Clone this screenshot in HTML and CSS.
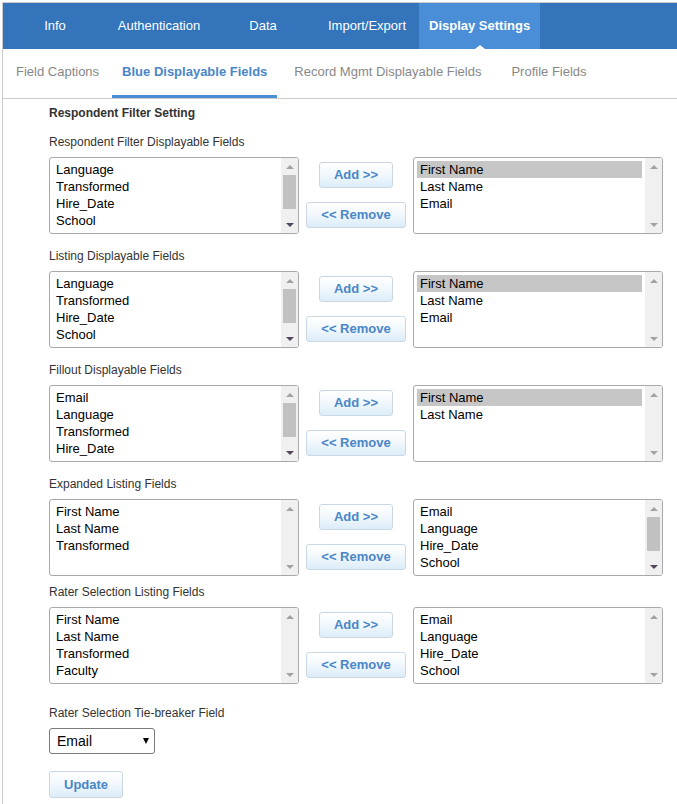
FILE: index.html
```html
<!DOCTYPE html>
<html lang="en">
<head>
<meta charset="utf-8">
<title>Display Settings</title>
<link rel="stylesheet" href="styles.css">
</head>
<body>
<div class="page">
  <nav class="topnav">
    <a class="topnav__item">Info</a>
    <a class="topnav__item">Authentication</a>
    <a class="topnav__item">Data</a>
    <a class="topnav__item">Import/Export</a>
    <a class="topnav__item topnav__item--active">Display Settings</a>
  </nav>
  <div class="subtabs">
    <a class="subtab subtab--1">Field Captions</a>
    <a class="subtab subtab--2 subtab--active">Blue Displayable Fields</a>
    <a class="subtab subtab--3">Record Mgmt Displayable Fields</a>
    <a class="subtab subtab--4">Profile Fields</a>
  </div>

  <div class="content">
    <h3 class="heading">Respondent Filter Setting</h3>

    <div class="section">
      <div class="label">Respondent Filter Displayable Fields</div>
      <div class="picker">
        <div class="listbox">
          <div class="listbox__items">
            <div class="option">Language</div>
            <div class="option">Transformed</div>
            <div class="option">Hire_Date</div>
            <div class="option">School</div>
            <div class="option">Faculty</div>
          </div>
          <div class="scrollbar scrollbar--scroll">
            <span class="sb-btn sb-btn--up"></span>
            <span class="sb-track"><span class="sb-thumb"></span></span>
            <span class="sb-btn sb-btn--down"></span>
          </div>
        </div>
        <div class="picker__actions">
          <button class="btn">Add &gt;&gt;</button>
          <button class="btn">&lt;&lt; Remove</button>
        </div>
        <div class="listbox">
          <div class="listbox__items">
            <div class="option option--selected">First Name</div>
            <div class="option">Last Name</div>
            <div class="option">Email</div>
          </div>
          <div class="scrollbar">
            <span class="sb-btn sb-btn--up"></span>
            <span class="sb-track"></span>
            <span class="sb-btn sb-btn--down"></span>
          </div>
        </div>
      </div>
    </div>

    <div class="section">
      <div class="label">Listing Displayable Fields</div>
      <div class="picker">
        <div class="listbox">
          <div class="listbox__items">
            <div class="option">Language</div>
            <div class="option">Transformed</div>
            <div class="option">Hire_Date</div>
            <div class="option">School</div>
            <div class="option">Faculty</div>
          </div>
          <div class="scrollbar scrollbar--scroll">
            <span class="sb-btn sb-btn--up"></span>
            <span class="sb-track"><span class="sb-thumb"></span></span>
            <span class="sb-btn sb-btn--down"></span>
          </div>
        </div>
        <div class="picker__actions">
          <button class="btn">Add &gt;&gt;</button>
          <button class="btn">&lt;&lt; Remove</button>
        </div>
        <div class="listbox">
          <div class="listbox__items">
            <div class="option option--selected">First Name</div>
            <div class="option">Last Name</div>
            <div class="option">Email</div>
          </div>
          <div class="scrollbar">
            <span class="sb-btn sb-btn--up"></span>
            <span class="sb-track"></span>
            <span class="sb-btn sb-btn--down"></span>
          </div>
        </div>
      </div>
    </div>

    <div class="section">
      <div class="label">Fillout Displayable Fields</div>
      <div class="picker">
        <div class="listbox">
          <div class="listbox__items">
            <div class="option">Email</div>
            <div class="option">Language</div>
            <div class="option">Transformed</div>
            <div class="option">Hire_Date</div>
            <div class="option">School</div>
          </div>
          <div class="scrollbar scrollbar--scroll">
            <span class="sb-btn sb-btn--up"></span>
            <span class="sb-track"><span class="sb-thumb"></span></span>
            <span class="sb-btn sb-btn--down"></span>
          </div>
        </div>
        <div class="picker__actions">
          <button class="btn">Add &gt;&gt;</button>
          <button class="btn">&lt;&lt; Remove</button>
        </div>
        <div class="listbox">
          <div class="listbox__items">
            <div class="option option--selected">First Name</div>
            <div class="option">Last Name</div>
          </div>
          <div class="scrollbar">
            <span class="sb-btn sb-btn--up"></span>
            <span class="sb-track"></span>
            <span class="sb-btn sb-btn--down"></span>
          </div>
        </div>
      </div>
    </div>

    <div class="section section--tight">
      <div class="label">Expanded Listing Fields</div>
      <div class="picker">
        <div class="listbox">
          <div class="listbox__items">
            <div class="option">First Name</div>
            <div class="option">Last Name</div>
            <div class="option">Transformed</div>
          </div>
          <div class="scrollbar">
            <span class="sb-btn sb-btn--up"></span>
            <span class="sb-track"></span>
            <span class="sb-btn sb-btn--down"></span>
          </div>
        </div>
        <div class="picker__actions">
          <button class="btn">Add &gt;&gt;</button>
          <button class="btn">&lt;&lt; Remove</button>
        </div>
        <div class="listbox">
          <div class="listbox__items">
            <div class="option">Email</div>
            <div class="option">Language</div>
            <div class="option">Hire_Date</div>
            <div class="option">School</div>
            <div class="option">Faculty</div>
          </div>
          <div class="scrollbar scrollbar--scroll">
            <span class="sb-btn sb-btn--up"></span>
            <span class="sb-track"><span class="sb-thumb"></span></span>
            <span class="sb-btn sb-btn--down"></span>
          </div>
        </div>
      </div>
    </div>

    <div class="section section--last">
      <div class="label">Rater Selection Listing Fields</div>
      <div class="picker">
        <div class="listbox">
          <div class="listbox__items">
            <div class="option">First Name</div>
            <div class="option">Last Name</div>
            <div class="option">Transformed</div>
            <div class="option">Faculty</div>
          </div>
          <div class="scrollbar">
            <span class="sb-btn sb-btn--up"></span>
            <span class="sb-track"></span>
            <span class="sb-btn sb-btn--down"></span>
          </div>
        </div>
        <div class="picker__actions">
          <button class="btn">Add &gt;&gt;</button>
          <button class="btn">&lt;&lt; Remove</button>
        </div>
        <div class="listbox">
          <div class="listbox__items">
            <div class="option">Email</div>
            <div class="option">Language</div>
            <div class="option">Hire_Date</div>
            <div class="option">School</div>
          </div>
          <div class="scrollbar">
            <span class="sb-btn sb-btn--up"></span>
            <span class="sb-track"></span>
            <span class="sb-btn sb-btn--down"></span>
          </div>
        </div>
      </div>
    </div>

    <div class="label">Rater Selection Tie-breaker Field</div>
    <div class="select">
      <span class="select__value">Email</span>
      <span class="select__arrow"></span>
    </div>

    <button class="btn btn--update">Update</button>
  </div>
</div>
</body>
</html>
```

FILE: styles.css
```css
html, body {
  margin: 0;
  padding: 0;
  background: #fff;
}

body {
  font-family: "Liberation Sans", Arial, sans-serif;
  font-size: 13px;
  color: #333;
}

.page {
  margin: 2px 0 0 2px;
  border-left: 1px solid #cccccc;
  border-top: 1px solid #cccccc;
  min-height: 820px;
}

/* Top navigation */
.topnav {
  display: flex;
  height: 46px;
  background: #3374bb;
}

.topnav__item {
  position: relative;
  box-sizing: border-box;
  min-width: 104px;
  padding: 0 10px;
  display: flex;
  align-items: center;
  justify-content: center;
  color: #fff;
  font-size: 13px;
  line-height: 46px;
  cursor: pointer;
}

.topnav__item--active {
  background: #4a8ed8;
  font-weight: bold;
}

.topnav__item--active::after {
  content: "";
  position: absolute;
  left: 50%;
  bottom: 0;
  margin-left: -5px;
  border-left: 5px solid transparent;
  border-right: 5px solid transparent;
  border-bottom: 4px solid #fff;
}

/* Sub tabs */
.subtabs {
  display: flex;
  height: 50px;
  box-sizing: border-box;
  border-bottom: 1px solid #cccccc;
  padding-left: 3px;
}

.subtab {
  box-sizing: border-box;
  height: 49px;
  padding: 15px 10px 0;
  line-height: 15px;
  font-size: 13px;
  color: #888;
  border-bottom: 3px solid transparent;
  white-space: nowrap;
  cursor: pointer;
}

.subtab--2 { margin-left: 3px; }
.subtab--3 { margin-left: 7px; }
.subtab--4 { margin-left: 10px; }

.subtab--active {
  color: #4a86c8;
  font-weight: bold;
  border-bottom-color: #4a8ed8;
}

/* Content */
.content {
  padding: 7px 0 20px 46px;
}

.heading {
  margin: 0 0 14px;
  font-size: 12px;
  line-height: 15px;
  font-weight: bold;
  color: #333;
}

.label {
  font-size: 12px;
  line-height: 15px;
  color: #333;
  margin-bottom: 7px;
}

.section {
  margin-bottom: 15px;
}

.section--tight {
  margin-bottom: 9px;
}

.section--last {
  margin-bottom: 22px;
}

.picker {
  display: grid;
  grid-template-columns: 250px 114px 250px;
}

.picker__actions {
  display: flex;
  flex-direction: column;
  align-items: center;
  gap: 14px;
  padding-top: 5px;
}

/* List boxes */
.listbox {
  display: flex;
  box-sizing: border-box;
  height: 77px;
  border: 1px solid #a9a9a9;
  border-radius: 3px;
  overflow: hidden;
  background: #fff;
}

.listbox__items {
  flex: 1;
  min-width: 0;
  padding: 3px;
  overflow: hidden;
}

.option {
  height: 17px;
  line-height: 17px;
  padding-left: 3px;
  font-size: 13px;
  color: #000;
  white-space: nowrap;
}

.option--selected {
  background: #c6c6c6;
}

.scrollbar {
  width: 17px;
  flex: none;
  display: flex;
  flex-direction: column;
  background: #f0f0f0;
}

.sb-btn {
  height: 17px;
  flex: none;
  display: flex;
  align-items: center;
  justify-content: center;
}

.sb-btn--up::before {
  content: "";
  border-left: 4px solid transparent;
  border-right: 4px solid transparent;
  border-bottom: 4px solid #a3a3a3;
}

.sb-btn--down::before {
  content: "";
  border-left: 4px solid transparent;
  border-right: 4px solid transparent;
  border-top: 4px solid #a3a3a3;
}

.scrollbar--scroll .sb-btn--down::before {
  border-top-color: #4f4659;
}

.sb-track {
  flex: 1;
  display: flex;
  flex-direction: column;
  align-items: center;
}

.sb-thumb {
  width: 13px;
  height: 34px;
  background: #c1c1c1;
}

/* Buttons */
.btn {
  box-sizing: border-box;
  height: 26px;
  padding: 0 14px;
  border: 1px solid #c9d8e4;
  border-radius: 3px;
  background: linear-gradient(to bottom, #ffffff 0%, #f4f9fd 40%, #dcedf8 100%);
  color: #4a86c8;
  font-family: "Liberation Sans", Arial, sans-serif;
  font-size: 13px;
  font-weight: bold;
  line-height: 24px;
  cursor: pointer;
}

.btn--update {
  display: block;
  margin-top: 17px;
  height: 27px;
}

/* Select */
.select {
  box-sizing: border-box;
  width: 106px;
  height: 26px;
  display: flex;
  align-items: center;
  justify-content: space-between;
  padding: 0 5px 0 7px;
  border: 1px solid #7a7a7a;
  border-radius: 3px;
  background: #fff;
  font-size: 14px;
  color: #000;
}

.select__arrow {
  border-left: 3.5px solid transparent;
  border-right: 3.5px solid transparent;
  border-top: 6px solid #000;
}
```
